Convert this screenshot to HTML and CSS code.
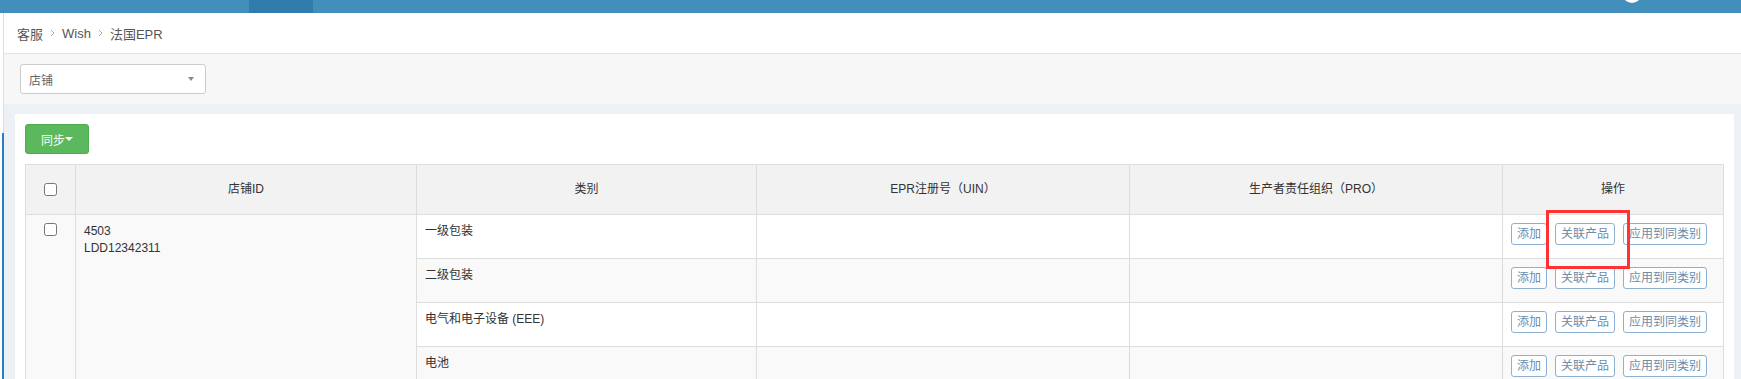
FILE: index.html
```html
<!DOCTYPE html>
<html lang="zh-CN">
<head>
    <meta charset="UTF-8">
    <meta name="viewport" content="width=device-width, initial-scale=1.0">
    <title>法国EPR</title>
    <link rel="stylesheet" href="styles.css">
</head>
<body>
    <div class="topbar">
        <div class="topbar-tab"></div>
        <div class="topbar-avatar"></div>
    </div>
    <div class="layout">
        <div class="sidebar">
            <div class="sidebar-top"></div>
            <div class="sidebar-active"></div>
        </div>
        <div class="main">
            <div class="breadcrumb">
                <span>客服</span>
                <svg class="sep" width="5" height="8" viewBox="0 0 5 8"><polyline points="1,1 4,4 1,7" fill="none" stroke="#aaa" stroke-width="1"/></svg>
                <span>Wish</span>
                <svg class="sep" width="5" height="8" viewBox="0 0 5 8"><polyline points="1,1 4,4 1,7" fill="none" stroke="#aaa" stroke-width="1"/></svg>
                <span>法国EPR</span>
            </div>
            <div class="filter-bar">
                <div class="select">
                    <span>店铺</span>
                    <span class="select-caret"></span>
                </div>
            </div>
            <div class="page-body">
                <div class="panel">
                    <button class="btn-sync">同步<span class="caret"></span></button>
                    <table class="epr-table">
                        <colgroup>
                            <col class="col-check">
                            <col class="col-shop">
                            <col class="col-type">
                            <col class="col-uin">
                            <col class="col-pro">
                            <col class="col-ops">
                        </colgroup>
                        <thead>
                            <tr>
                                <th><input type="checkbox"></th>
                                <th>店铺ID</th>
                                <th>类别</th>
                                <th>EPR注册号（UIN）</th>
                                <th>生产者责任组织（PRO）</th>
                                <th>操作</th>
                            </tr>
                        </thead>
                        <tbody>
                            <tr>
                                <td class="cell-check" rowspan="5"><input type="checkbox"></td>
                                <td class="cell-shop" rowspan="5">4503<br>LDD12342311</td>
                                <td>一级包装</td>
                                <td></td>
                                <td></td>
                                <td class="cell-ops cell-marked">
                                    <div class="ops">
                                        <button class="btn-op">添加</button>
                                        <button class="btn-op">关联产品</button>
                                        <button class="btn-op">应用到同类别</button>
                                    </div>
                                    <div class="mark"></div>
                                </td>
                            </tr>
                            <tr class="striped">
                                <td>二级包装</td>
                                <td></td>
                                <td></td>
                                <td class="cell-ops">
                                    <div class="ops">
                                        <button class="btn-op">添加</button>
                                        <button class="btn-op">关联产品</button>
                                        <button class="btn-op">应用到同类别</button>
                                    </div>
                                </td>
                            </tr>
                            <tr>
                                <td>电气和电子设备 (EEE)</td>
                                <td></td>
                                <td></td>
                                <td class="cell-ops">
                                    <div class="ops">
                                        <button class="btn-op">添加</button>
                                        <button class="btn-op">关联产品</button>
                                        <button class="btn-op">应用到同类别</button>
                                    </div>
                                </td>
                            </tr>
                            <tr class="striped">
                                <td>电池</td>
                                <td></td>
                                <td></td>
                                <td class="cell-ops">
                                    <div class="ops">
                                        <button class="btn-op">添加</button>
                                        <button class="btn-op">关联产品</button>
                                        <button class="btn-op">应用到同类别</button>
                                    </div>
                                </td>
                            </tr>
                            <tr>
                                <td>家具</td>
                                <td></td>
                                <td></td>
                                <td class="cell-ops">
                                    <div class="ops">
                                        <button class="btn-op">添加</button>
                                        <button class="btn-op">关联产品</button>
                                        <button class="btn-op">应用到同类别</button>
                                    </div>
                                </td>
                            </tr>
                        </tbody>
                    </table>
                </div>
            </div>
        </div>
    </div>
</body>
</html>
```

FILE: styles.css
```css
body {
    margin: 0;
    font-family: "Liberation Sans", "Noto Sans CJK SC", sans-serif;
    font-size: 12px;
    color: #333;
    background-color: #edf1f5;
    overflow: hidden;
}
.topbar {
    height: 13px;
    display: flex;
    background-color: #428fbc;
}
.topbar-tab {
    width: 64px;
    margin-left: 249px;
    background-color: #327bad;
}
.topbar-avatar {
    width: 20px;
    height: 20px;
    margin-top: -17px;
    margin-left: auto;
    margin-right: 99px;
    border-radius: 50%;
    background-color: #fff;
}
.layout {
    display: flex;
}
.sidebar {
    width: 4px;
    display: flex;
    flex-direction: column;
    background-color: #fff;
}
.sidebar-top {
    height: 120px;
    border-right: 1px solid #ddd;
}
.sidebar-active {
    flex: 1;
    border-right: 2px solid #2f7dbf;
}
.main {
    flex: 1;
}
.breadcrumb {
    height: 40px;
    display: flex;
    align-items: center;
    padding-left: 13px;
    background-color: #fff;
    border-bottom: 1px solid #e5e5e5;
    font-size: 13px;
    color: #555;
}
.breadcrumb .sep {
    margin: 0 7px;
}
.filter-bar {
    height: 50px;
    box-sizing: border-box;
    padding: 10px 16px;
    background-color: #f7f7f7;
}
.select {
    width: 186px;
    height: 30px;
    box-sizing: border-box;
    display: flex;
    align-items: center;
    justify-content: space-between;
    padding: 0 11px 0 8px;
    background-color: #fff;
    border: 1px solid #ccc;
    border-radius: 3px;
    color: #666;
}
.select-caret {
    width: 0;
    height: 0;
    border-top: 4px solid #888;
    border-left: 3px solid transparent;
    border-right: 3px solid transparent;
}
.page-body {
    padding: 10px 7px 0 11px;
}
.panel {
    padding: 10px;
    background-color: #fff;
}
.btn-sync {
    height: 30px;
    display: flex;
    align-items: center;
    margin-bottom: 10px;
    padding: 0 15px;
    font-family: inherit;
    font-size: 12px;
    color: #fff;
    background-color: #5cb85c;
    border: 1px solid #4cae4c;
    border-radius: 3px;
}
.btn-sync .caret {
    width: 0;
    height: 0;
    border-top: 4px solid #fff;
    border-left: 4px solid transparent;
    border-right: 4px solid transparent;
}
.epr-table {
    width: 100%;
    table-layout: fixed;
    border-collapse: collapse;
    border: 1px solid #ddd;
}
.col-check { width: 50px; }
.col-shop { width: 341px; }
.col-type { width: 340px; }
.col-uin { width: 373px; }
.col-pro { width: 373px; }
.col-ops { width: 221px; }
.epr-table th {
    padding: 16px 8px;
    line-height: 17px;
    font-weight: normal;
    text-align: center;
    background-color: #f2f2f2;
    border: 1px solid #ddd;
}
.epr-table td {
    padding: 8px;
    line-height: 17px;
    vertical-align: top;
    border: 1px solid #ddd;
    background-color: #fff;
}
.epr-table tr.striped td {
    background-color: #f9f9f9;
}
.epr-table td.cell-check,
.epr-table td.cell-shop {
    background-color: #f9f9f9;
}
.epr-table td.cell-check {
    text-align: center;
}
.epr-table input[type="checkbox"] {
    width: 13px;
    height: 13px;
    margin: 0;
    vertical-align: middle;
}
.epr-table td.cell-check input[type="checkbox"] {
    vertical-align: top;
}
.cell-marked {
    position: relative;
}
.ops {
    display: flex;
    gap: 8px;
}
.btn-op {
    margin-bottom: 5px;
    padding: 1px 5px;
    font-family: inherit;
    font-size: 12px;
    line-height: 18px;
    color: #6c8cab;
    background-color: #fff;
    border: 1px solid #8eb1d3;
    border-radius: 3px;
}
.mark {
    position: absolute;
    z-index: 1;
    left: 43px;
    top: -5px;
    width: 78px;
    height: 53px;
    border: 3px solid #f33;
}
```
